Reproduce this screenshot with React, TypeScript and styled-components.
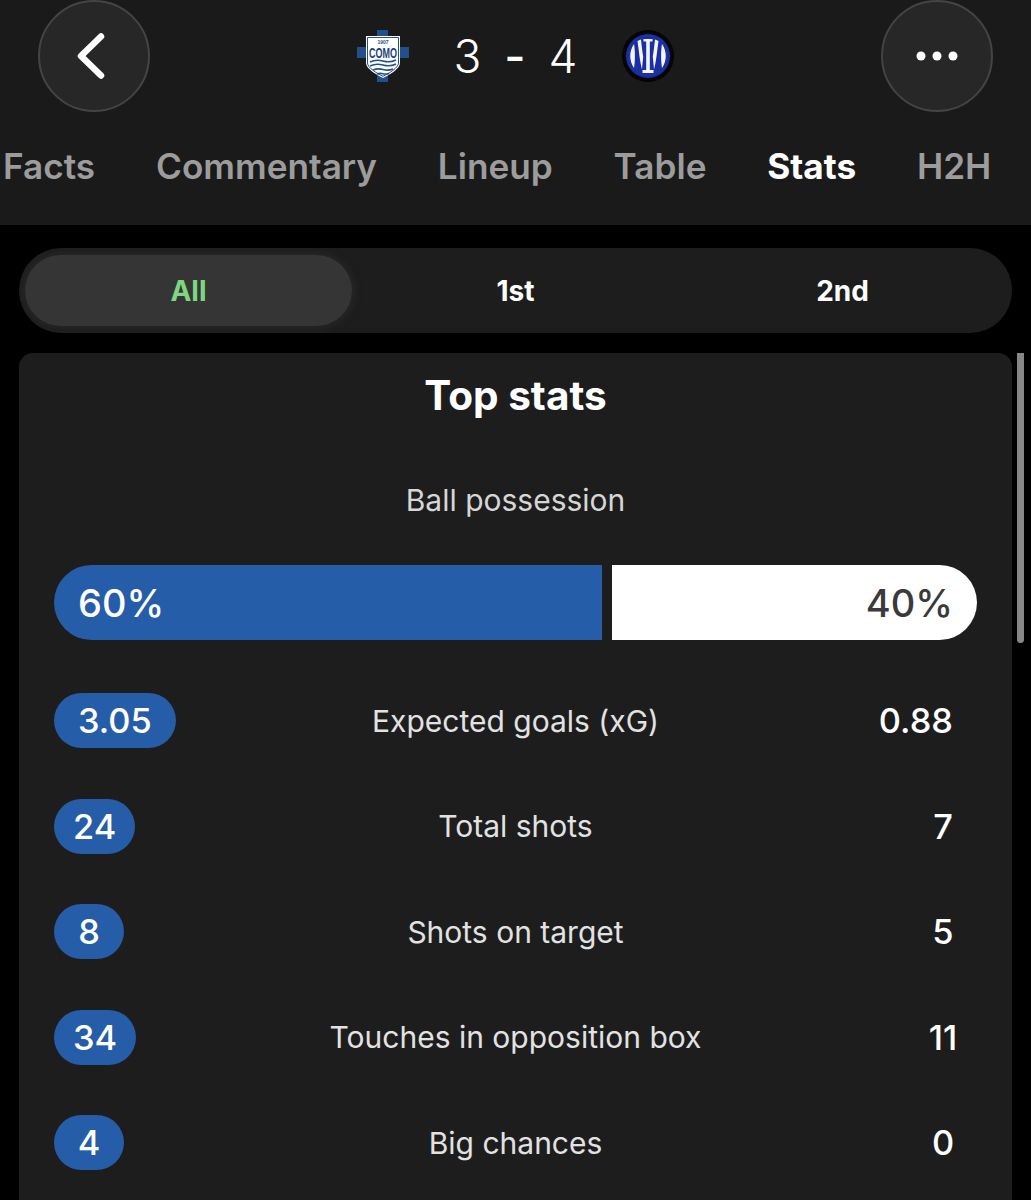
import React from "react";
import styled, { createGlobalStyle } from "styled-components";

const Global = createGlobalStyle`
  html, body { margin: 0; padding: 0; background: #000; }
  body { font-family: Inter, "Liberation Sans", sans-serif; -webkit-font-smoothing: antialiased; }
`;

const Screen = styled.div`
  width: 1031px;
  height: 1200px;
  overflow: hidden;
  background: #000;
`;

const Header = styled.header`
  height: 225px;
  background: #1a1a1a;
  overflow: hidden;
`;

const TopRow = styled.div`
  height: 112px;
  padding: 0 38px;
  display: flex;
  align-items: center;
  justify-content: space-between;
`;

const RoundButton = styled.div`
  box-sizing: border-box;
  width: 112px;
  height: 112px;
  border-radius: 50%;
  background: #272727;
  border: 2px solid #444444;
  display: flex;
  align-items: center;
  justify-content: center;
`;

const ScoreGroup = styled.div`
  display: flex;
  align-items: center;
  gap: 44px;
`;

const Score = styled.div`
  display: flex;
  align-items: center;
  gap: 23px;
  font-size: 46px;
  font-weight: 300;
  color: #fff;
  line-height: 1;
`;

const ScoreDash = styled.span`
  font-weight: 500;
`;

const Tabs = styled.nav`
  display: flex;
  gap: 60.8px;
  padding: 36px 0 0 3px;
  white-space: nowrap;
`;

const Tab = styled.span<{ $active?: boolean }>`
  font-size: 35.2px;
  line-height: 37px;
  font-weight: ${(p) => (p.$active ? 700 : 600)};
  color: ${(p) => (p.$active ? "#ffffff" : "#9c9c9c")};
`;

const Segments = styled.div`
  box-sizing: border-box;
  margin: 23px 19px 0;
  height: 85px;
  padding: 7px 6px;
  border-radius: 42px;
  background: #1d1d1d;
  display: grid;
  grid-template-columns: repeat(3, 1fr);
  overflow: hidden;
`;

const Segment = styled.div<{ $active?: boolean }>`
  display: flex;
  align-items: center;
  justify-content: center;
  border-radius: 36px;
  font-size: 28px;
  font-weight: 700;
  color: ${(p) => (p.$active ? "#7ed67f" : "#ffffff")};
  background: ${(p) => (p.$active ? "#353535" : "transparent")};
  box-shadow: ${(p) => (p.$active ? "0 0 6px 3px #262626" : "none")};
`;

const Body = styled.main`
  position: relative;
  margin-top: 20px;
`;

const ScrollThumb = styled.div`
  position: absolute;
  left: 1017px;
  top: 0;
  width: 7px;
  height: 290px;
  border-radius: 0 0 4px 4px;
  background: #868686;
`;

const Card = styled.section`
  margin: 0 19px;
  height: 860px;
  padding: 0 35px;
  border-radius: 14px 14px 0 0;
  background: #1d1d1d;
`;

const CardTitle = styled.h2`
  margin: 0;
  padding-top: 20px;
  font-size: 40.5px;
  line-height: 46px;
  font-weight: 700;
  color: #fff;
  text-align: center;
`;

const PossessionLabel = styled.div`
  margin-top: 61px;
  font-size: 30px;
  line-height: 40px;
  color: #d6d6d6;
  text-align: center;
`;

const PossessionBar = styled.div`
  margin-top: 45px;
  height: 75px;
  display: grid;
  grid-template-columns: 548fr 365fr;
  gap: 10px;
  border-radius: 38px;
  overflow: hidden;
`;

const PossessionSide = styled.div<{ $away?: boolean }>`
  display: flex;
  align-items: center;
  justify-content: ${(p) => (p.$away ? "flex-end" : "flex-start")};
  padding: 0 ${(p) => (p.$away ? 24 : 24)}px;
  font-size: 38px;
  font-weight: 450;
  background: ${(p) => (p.$away ? "#ffffff" : "#265da8")};
  color: ${(p) => (p.$away ? "#3a3a3a" : "#ffffff")};
`;

const Rows = styled.div`
  margin-top: 53px;
  display: flex;
  flex-direction: column;
  gap: 50.5px;
`;

const Row = styled.div`
  display: grid;
  grid-template-columns: 1fr auto 1fr;
  align-items: center;
  height: 55px;
`;

const RowLabel = styled.div`
  font-size: 30px;
  color: #e2e2e2;
  text-align: center;
`;

const Value = styled.div<{ $home?: boolean; $wide?: boolean }>`
  box-sizing: border-box;
  justify-self: ${(p) => (p.$home ? "start" : "end")};
  min-width: ${(p) => (p.$home ? 70 : 68)}px;
  height: 55px;
  padding: 0 ${(p) => (p.$wide ? 24 : 19)}px;
  border-radius: 28px;
  display: flex;
  align-items: center;
  justify-content: center;
  font-size: 34.4px;
  font-weight: 450;
  color: #fff;
  background: ${(p) => (p.$home ? "#265da8" : "transparent")};
`;

const ComoCrest = () => (
  <svg width="52" height="52" viewBox="0 0 52 52">
    <rect x="20" y="0" width="11" height="52" fill="#24508a" />
    <rect x="0" y="17" width="52" height="11" fill="#24508a" />
    <path d="M9 6h34v27c0 6-11 12-17 15C20 45 9 39 9 33z" fill="#fff" />
    <path d="M10.500 7.500h31v25.500c0 5-10 10.500-15.500 13.300C20.500 43.500 10.500 38 10.500 33z" fill="none" stroke="#24508a" strokeWidth="1" />
    <text x="26" y="13.500" textAnchor="middle" fontFamily="Liberation Sans" fontSize="5" fontWeight="700" fill="#24508a">1907</text>
    <text transform="translate(26 28) scale(0.6 1)" textAnchor="middle" fontFamily="Liberation Sans" fontSize="15" fontWeight="700" fill="#1d4478">COMO</text>
    <path d="M13 32q6-3 13-1t13-1M13 36q6-3 13-1t13-1M16 40q5-2 10-.5t10-.5M20 44q3-1 6-.3t6-.3" fill="none" stroke="#24508a" strokeWidth="1.600" />
  </svg>
);

const InterCrest = () => (
  <svg width="52" height="52" viewBox="0 0 52 52">
    <circle cx="26" cy="26" r="26" fill="#050505" />
    <circle cx="26" cy="26" r="22" fill="#1b2fa0" />
    <g fill="#f4f6ff">
      <path d="M12 14c-5 7-5 17 0 24 1.200-7 1.200-17 0-24z" />
      <path d="M40 14c5 7 5 17 0 24-1.200-7-1.200-17 0-24z" />
      <path d="M15.500 11l3.500-1.500c1 9 1.500 13 2.200 17-.4 5-.8 8-1.200 13-2.500-9-3-19-4.500-28.500z" />
      <path d="M36.500 11l-3.500-1.500c-1 9-1.500 13-2.200 17 .4 5 .8 8 1.200 13 2.500-9 3-19 4.500-28.500z" />
      <rect x="24.200" y="10" width="3.600" height="32" />
      <rect x="21.500" y="9" width="9" height="2.500" />
      <rect x="20.500" y="40" width="11" height="3" />
    </g>
  </svg>
);

const stats: { label: string; home: string; away: string; wide?: boolean }[] = [
  { label: "Expected goals (xG)", home: "3.05", away: "0.88", wide: true },
  { label: "Total shots", home: "24", away: "7" },
  { label: "Shots on target", home: "8", away: "5" },
  { label: "Touches in opposition box", home: "34", away: "11" },
  { label: "Big chances", home: "4", away: "0" },
];

const tabs = ["Facts", "Commentary", "Lineup", "Table", "Stats", "H2H"];

export default function App() {
  return (
    <Screen>
      <Global />
      <Header>
        <TopRow>
          <RoundButton>
            <svg width="108" height="108" viewBox="2 2 108 108">
              <path d="M63 36.500 43 56l20 19.500" fill="none" stroke="#fff" strokeWidth="6.500" strokeLinecap="round" strokeLinejoin="round" />
            </svg>
          </RoundButton>
          <ScoreGroup>
            <ComoCrest />
            <Score>
              <span>3</span>
              <ScoreDash>-</ScoreDash>
              <span>4</span>
            </Score>
            <InterCrest />
          </ScoreGroup>
          <RoundButton>
            <svg width="50" height="12" viewBox="0 0 50 12">
              <circle cx="9" cy="6" r="4.500" fill="#fff" />
              <circle cx="25" cy="6" r="4.500" fill="#fff" />
              <circle cx="41" cy="6" r="4.500" fill="#fff" />
            </svg>
          </RoundButton>
        </TopRow>
        <Tabs>
          {tabs.map((t) => (
            <Tab key={t} $active={t === "Stats"}>{t}</Tab>
          ))}
        </Tabs>
      </Header>
      <Segments>
        <Segment $active>All</Segment>
        <Segment>1st</Segment>
        <Segment>2nd</Segment>
      </Segments>
      <Body>
        <Card>
          <CardTitle>Top stats</CardTitle>
          <PossessionLabel>Ball possession</PossessionLabel>
          <PossessionBar>
            <PossessionSide>60%</PossessionSide>
            <PossessionSide $away>40%</PossessionSide>
          </PossessionBar>
          <Rows>
            {stats.map((s) => (
              <Row key={s.label}>
                <Value $home $wide={s.wide}>{s.home}</Value>
                <RowLabel>{s.label}</RowLabel>
                <Value $wide={s.wide}>{s.away}</Value>
              </Row>
            ))}
          </Rows>
        </Card>
        <ScrollThumb />
      </Body>
    </Screen>
  );
}
